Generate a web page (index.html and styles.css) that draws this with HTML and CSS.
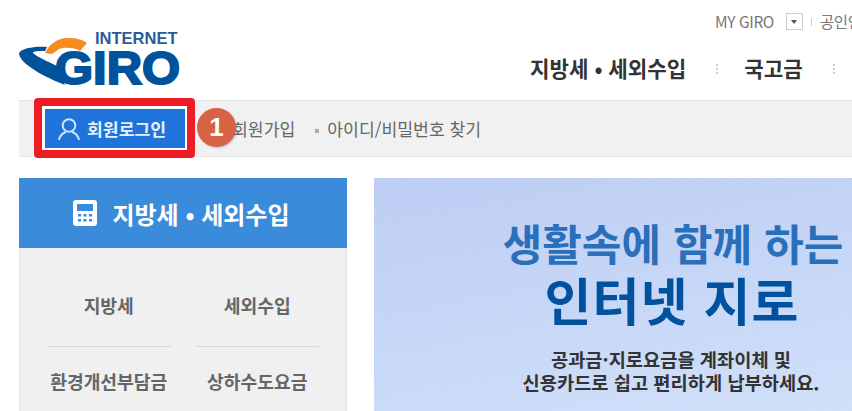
FILE: index.html
```html
<!DOCTYPE html>
<html lang="ko">
<head>
  <meta charset="UTF-8" />
  <meta name="viewport" content="width=device-width, initial-scale=1.0" />
  <title>인터넷 지로</title>
  <link rel="stylesheet" href="styles.css">
</head>
<body>
  <div class="page">
    <div class="header">
      <svg class="logo" width="170" height="66" viewBox="0 0 170 66">
        <path class="logo-orange" d="M26 25 C30 16 40 9 50 10 C58 10 64 12 68 15 L61 23 C55 19 46 19 40 21 L33 26 Z" />
        <path class="logo-blue" d="M0 25 C3 20 16 18 28 19 L26 23 C20 23 14 23 14 25 C18 29 30 34 38 38 L46 57 C28 50 0 36 0 25 Z" />
        <text class="logo-net" x="76" y="16">INTERNET</text>
        <text class="logo-giro" x="36" y="56" textLength="125" lengthAdjust="spacingAndGlyphs">GIRO</text>
      </svg>
      <div class="header-right">
        <div class="util">
          <span class="util-link">MY GIRO</span>
          <span class="util-arrow"></span>
          <span class="util-sep"></span>
          <span class="util-link">공인인증</span>
        </div>
        <div class="gnb">
          <span class="gnb-item">지방세 • 세외수입</span>
          <span class="gnb-dots"></span>
          <span class="gnb-item">국고금</span>
          <span class="gnb-dots"></span>
        </div>
      </div>
    </div>

    <div class="login-bar">
      <a class="login-btn">
        <svg width="24" height="24" viewBox="0 0 24 24" class="login-icon">
          <circle cx="12" cy="8.5" r="6.3" />
          <path d="M2 23 C3 18 6 16 9 15 M22 23 C21 18 18 16 15 15" />
        </svg>
        회원로그인
      </a>
      <span class="login-link join">회원가입</span>
      <span class="login-link">아이디/비밀번호 찾기</span>
      <div class="mark-frame"></div>
      <div class="mark-num">1</div>
    </div>

    <div class="main">
      <div class="side">
        <div class="side-head">
          <svg width="24" height="26" viewBox="0 0 24 26">
            <rect width="24" height="26" rx="3" fill="#fff" />
            <rect x="4" y="4" width="16" height="7" fill="#3b8bdb" />
            <g fill="#3b8bdb">
              <rect x="5" y="14" width="3" height="2.5" /><rect x="10.5" y="14" width="3" height="2.5" /><rect x="16" y="14" width="3" height="2.5" />
              <rect x="5" y="19" width="3" height="2.5" /><rect x="10.5" y="19" width="3" height="2.5" /><rect x="16" y="19" width="3" height="2.5" />
            </g>
          </svg>
          지방세 • 세외수입
        </div>
        <div class="side-grid">
          <div class="side-cell line">지방세</div>
          <div class="side-cell line">세외수입</div>
          <div class="side-cell">환경개선부담금</div>
          <div class="side-cell">상하수도요금</div>
        </div>
      </div>
      <div class="banner">
        <div class="banner-sub">생활속에 함께 하는</div>
        <div class="banner-title">인터넷 지로</div>
        <div class="banner-text">공과금·지로요금을 계좌이체 및<br>신용카드로 쉽고 편리하게 납부하세요.</div>
      </div>
    </div>
  </div>
</body>
</html>
```

FILE: styles.css
```css
body {
  margin: 0;
  background: #fff;
  font-family: "Noto Sans CJK KR", "Noto Sans", sans-serif;
  overflow: hidden;
}
.page {
  width: 852px;
  height: 411px;
  overflow: hidden;
}
.header {
  display: flex;
  justify-content: space-between;
  height: 100px;
  padding-left: 19px;
}
.logo {
  margin-top: 28px;
}
.logo-orange { fill: #f68b1f; }
.logo-blue { fill: #00529b; }
.logo-net {
  font-family: "Liberation Sans", sans-serif;
  font-size: 16.5px;
  font-weight: bold;
  fill: #2a5c9a;
}
.logo-giro {
  font-family: "Liberation Sans", sans-serif;
  font-size: 46px;
  font-weight: bold;
  fill: #00529b;
  stroke: #00529b;
  stroke-width: 2px;
}
.header-right {
  width: 322px;
  flex: none;
  overflow: hidden;
}
.util {
  display: flex;
  align-items: center;
  height: 20px;
  margin-top: 11px;
  padding-left: 185px;
  font-size: 15.5px;
  letter-spacing: -0.4px;
  color: #777;
  white-space: nowrap;
}
.util-arrow {
  position: relative;
  flex: none;
  width: 17px;
  height: 17px;
  margin-left: 12px;
  border: 1px solid #ccc;
  box-sizing: border-box;
}
.util-arrow::after {
  content: "";
  position: absolute;
  left: 4px;
  top: 6px;
  border: 3.5px solid transparent;
  border-top: 4px solid #555;
}
.util-sep {
  flex: none;
  width: 1px;
  height: 8px;
  margin: 2px 8px 0 8px;
  background: #ccc;
}
.gnb {
  display: flex;
  align-items: center;
  height: 30px;
  margin-top: 21px;
  white-space: nowrap;
}
.gnb-item {
  font-size: 21.2px;
  font-weight: 700;
  color: #333;
}
.gnb-dots {
  flex: none;
  height: 10px;
  margin: 4px 26px 0 30px;
  border-left: 2px dotted #ccc;
}
.login-bar {
  position: relative;
  display: flex;
  align-items: center;
  height: 55px;
  margin-left: 19px;
  background: #f1f1f1;
  border-top: 1px solid #e6e6e6;
  border-bottom: 1px solid #e6e6e6;
}
.login-btn {
  display: flex;
  align-items: center;
  gap: 6px;
  flex: none;
  width: 140px;
  height: 39px;
  margin-left: 26px;
  padding-left: 12px;
  box-sizing: border-box;
  background: #1f74db;
  box-shadow: 0 0 0 3px #fff;
  color: #e8f1fb;
  font-size: 17.2px;
  font-weight: 700;
  white-space: nowrap;
}
.login-icon {
  flex: none;
  fill: none;
  stroke: #cfe3f8;
  stroke-width: 2;
}
.login-link {
  margin-left: 20px;
  font-size: 17.2px;
  color: #666;
  white-space: nowrap;
}
.login-link::before {
  content: "";
  display: inline-block;
  width: 4px;
  height: 4px;
  margin-right: 8px;
  vertical-align: middle;
  background: #aaa;
}
.login-link.join {
  margin-left: 47px;
}
.login-link.join::before {
  display: none;
}
.mark-frame {
  position: absolute;
  left: 15px;
  top: -3px;
  width: 145px;
  height: 44px;
  border: 8px solid #ee1c25;
  border-radius: 4px;
}
.mark-num {
  position: absolute;
  left: 178px;
  top: 7px;
  width: 39px;
  height: 39px;
  border-radius: 50%;
  background: #d66444;
  box-shadow: 1px 1px 2px rgba(0, 0, 0, 0.2);
  color: #fff;
  font-family: "Liberation Sans", sans-serif;
  font-size: 26px;
  font-weight: bold;
  line-height: 39px;
  text-align: center;
}
.main {
  display: flex;
  gap: 27px;
  margin: 21px 0 0 19px;
}
.side {
  flex: none;
  width: 328px;
}
.side-head {
  display: flex;
  align-items: center;
  justify-content: center;
  gap: 15px;
  height: 70px;
  padding-right: 3px;
  box-sizing: border-box;
  background: #3b8bdb;
  color: #fff;
  font-size: 24px;
  font-weight: 700;
}
.side-grid {
  display: grid;
  grid-template-columns: 1fr 1fr;
  grid-template-rows: 99px 71px;
  column-gap: 25px;
  padding: 0 27px;
  background: #f0f0f0;
  border: 1px solid #e2e2e2;
  border-top: none;
}
.side-cell {
  display: flex;
  align-items: center;
  justify-content: center;
  padding-bottom: 4px;
  box-sizing: border-box;
  font-size: 18.2px;
  font-weight: 700;
  color: #666;
  white-space: nowrap;
}
.side-cell.line {
  padding: 16px 0 0;
  border-bottom: 1px solid #d8d8d8;
}
.banner {
  flex: none;
  width: 478px;
  height: 240px;
  box-sizing: border-box;
  padding: 36px 0 0 0;
  background:
    repeating-linear-gradient(45deg, rgba(255, 255, 255, 0.03) 0 2px, transparent 2px 4px),
    repeating-linear-gradient(-45deg, rgba(255, 255, 255, 0.03) 0 2px, transparent 2px 4px),
    linear-gradient(170deg, #bbccf4, #d0dff9);
  text-align: center;
}
.banner-sub {
  margin-left: 120px;
  font-size: 43px;
  font-weight: 700;
  line-height: 56px;
  color: #2a6fba;
  white-space: nowrap;
}
.banner-title {
  margin-left: 118px;
  font-size: 51px;
  font-weight: 700;
  line-height: 58px;
  color: #00519e;
  letter-spacing: 1px;
  white-space: nowrap;
}
.banner-text {
  margin: 19px 0 0 116px;
  font-size: 18.7px;
  font-weight: 700;
  line-height: 23px;
  color: #333;
  white-space: nowrap;
}
```
